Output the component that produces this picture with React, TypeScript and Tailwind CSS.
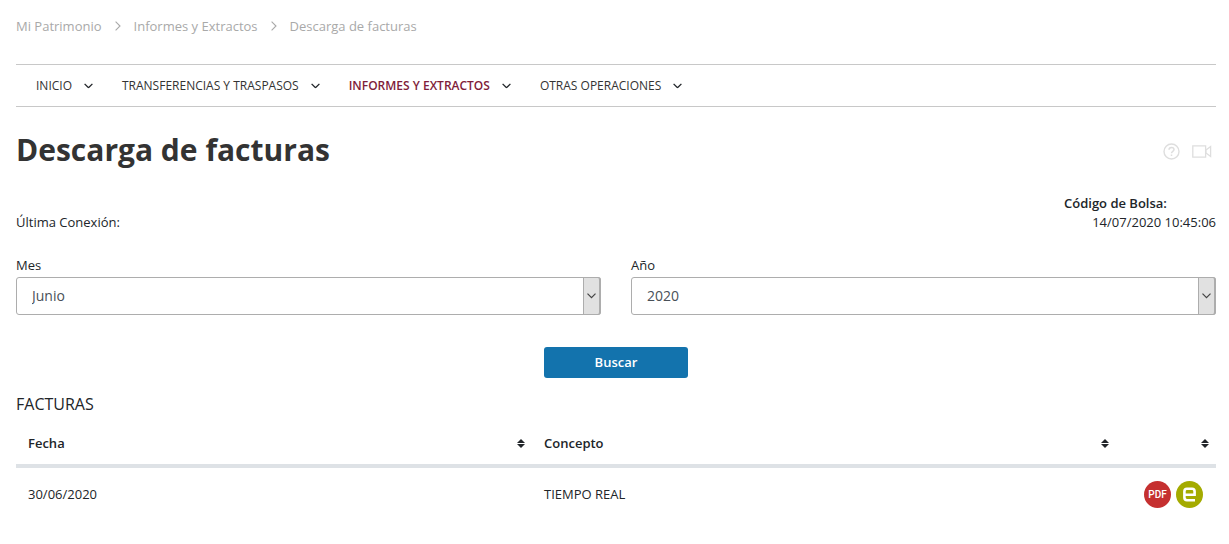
import type { ReactNode } from 'react';

const crumbs = ['Mi Patrimonio', 'Informes y Extractos', 'Descarga de facturas'];

const menu = [
  { label: 'INICIO', active: false },
  { label: 'TRANSFERENCIAS Y TRASPASOS', active: false },
  { label: 'INFORMES Y EXTRACTOS', active: true },
  { label: 'OTRAS OPERACIONES', active: false },
];

function Chevron() {
  return (
    <svg width="9" height="6" viewBox="0 0 9 6" fill="none" stroke="currentColor" strokeWidth="1.3" aria-hidden="true">
      <path d="M0.6 0.9L4 4.3Q4.5 4.7 5 4.3L8.4 0.9" />
    </svg>
  );
}

function SortButton({ label }: { label: string }) {
  return (
    <button type="button" aria-label={label} className="block text-[#212529]">
      <svg width="8" height="9" viewBox="0 0 8 9" fill="currentColor" aria-hidden="true">
        <path d="M4 0L8 4H0ZM4 9L0 5H8Z" />
      </svg>
    </button>
  );
}

function Field({ id, label, options }: { id: string; label: string; options: string[] }) {
  return (
    <div>
      <label htmlFor={id} className="block leading-5">
        {label}
      </label>
      <div className="relative mt-0.5">
        <select
          id={id}
          className="block h-[38px] w-full appearance-none rounded-[3px] border border-[#adadad] bg-white pr-8 pl-[15px] text-sm text-[#495057]"
        >
          {options.map((o) => (
            <option key={o}>{o}</option>
          ))}
        </select>
        <span className="pointer-events-none absolute inset-y-0 right-0 flex w-[18px] items-center justify-center rounded-r-[3px] border border-r-2 border-[#adadad] bg-[#e1e1e1] text-[#444]">
          <svg width="9" height="6" viewBox="0 0 9 6" fill="none" stroke="currentColor" strokeWidth="1.2" aria-hidden="true">
            <path d="M0.5 0.7L4.5 4.7L8.5 0.7" />
          </svg>
        </span>
      </div>
    </div>
  );
}

function HeadCell({ children, sort }: { children?: ReactNode; sort: string }) {
  return (
    <th className="h-12 border-b-4 border-[#dee2e6] pt-[3px] pr-[7px] pl-3 text-left font-semibold">
      <div className="flex items-center justify-between">
        <span>{children}</span>
        <SortButton label={sort} />
      </div>
    </th>
  );
}

export default function App() {
  return (
    <main className="pr-[13px] pl-4 font-['Open_Sans',sans-serif] text-[13px] text-[#212529]">
      <nav aria-label="Ruta" className="flex h-16 items-start pt-4 leading-5 text-[#a9a9a9]">
        <ol className="flex">
          {crumbs.map((c, i) => (
            <li key={c} className="flex items-center">
              {i > 0 && (
                <svg className="mx-[13px]" width="6" height="10" viewBox="0 0 6 10" fill="none" stroke="currentColor" strokeWidth="1.1" aria-hidden="true">
                  <path d="M0.6 0.6L5 5L0.6 9.4" />
                </svg>
              )}
              <a href="#">{c}</a>
            </li>
          ))}
        </ol>
      </nav>

      <nav aria-label="Principal" className="border-y border-[#c8c8c8] pl-5">
        <ul className="flex h-[41px] items-center gap-[29px] text-xs">
          {menu.map((m) => (
            <li key={m.label}>
              <a href="#" className="flex items-center gap-3">
                <span className={m.active ? 'font-semibold text-[#7f1d3a]' : 'text-[#333]'}>{m.label}</span>
                <Chevron />
              </a>
            </li>
          ))}
        </ul>
      </nav>

      <header className="flex items-center justify-between pt-5 pr-1">
        <h1 className="text-3xl leading-[46px] font-bold text-[#333]">Descarga de facturas</h1>
        <div className="flex items-center gap-3 pt-[3px] text-[#dedede]">
          <button type="button" aria-label="Ayuda">
            <svg width="17" height="17" viewBox="0 0 17 17" fill="none" stroke="currentColor" strokeWidth="1.4" aria-hidden="true">
              <circle cx="8.5" cy="8.5" r="7.5" />
              <path d="M6 6.8C6 5.3 7 4.4 8.5 4.4S11 5.3 11 6.6C11 8.3 8.5 8.4 8.5 10.3M8.5 11.6V13" strokeWidth="1.5" />
            </svg>
          </button>
          <button type="button" aria-label="Vídeo">
            <svg width="20" height="13" viewBox="0 0 20 13" fill="none" stroke="currentColor" strokeWidth="1.3" aria-hidden="true">
              <path d="M0.8 0.8H13.6V12.2H0.8ZM14 5L18.6 1.6V11.4L14 8Z" />
            </svg>
          </button>
        </div>
      </header>

      <div className="flex items-end justify-between pt-[21px] leading-[19px]">
        <p>Última Conexión:</p>
        <div className="w-[152px]">
          <p className="font-semibold">Código de Bolsa:</p>
          <p className="text-right">14/07/2020 10:45:06</p>
        </div>
      </div>

      <form onSubmit={(e) => e.preventDefault()} className="pt-[23px]">
        <div className="grid grid-cols-2 gap-[30px]">
          <Field id="mes" label="Mes" options={['Junio']} />
          <Field id="anio" label="Año" options={['2020']} />
        </div>
        <div className="flex justify-center pt-8">
          <button type="submit" className="h-[31px] w-36 rounded-[3px] bg-[#1373ad] font-semibold text-white">
            Buscar
          </button>
        </div>
      </form>

      <h2 className="pt-4 text-base leading-5 font-medium">FACTURAS</h2>

      <table className="mt-1.5 w-full table-fixed border-separate border-spacing-0">
        <colgroup>
          <col className="w-[43%]" />
          <col />
          <col className="w-[100px]" />
        </colgroup>
        <thead>
          <tr>
            <HeadCell sort="Ordenar por fecha">Fecha</HeadCell>
            <HeadCell sort="Ordenar por concepto">Concepto</HeadCell>
            <HeadCell sort="Ordenar por documento" />
          </tr>
        </thead>
        <tbody>
          <tr>
            <td className="h-[53px] pl-3">30/06/2020</td>
            <td className="pl-3">TIEMPO REAL</td>
            <td className="pr-[13px]">
              <div className="flex justify-end gap-[5px]">
                <a href="#" className="flex size-[27px] items-center justify-center rounded-full bg-[#c53030] font-['Roboto',sans-serif] text-[10px] font-medium text-white">
                  PDF
                </a>
                <a href="#" aria-label="Factura electrónica" className="flex size-[27px] items-center justify-center rounded-full bg-[#a4ab00]">
                  <svg width="27" height="27" viewBox="0 0 27 27" fill="none" stroke="#fff" strokeWidth="2.6" aria-hidden="true">
                    <path d="M19 19.2H11Q8.4 19.2 8.4 16.6V10.4Q8.4 7.8 11 7.8H16Q18.6 7.8 18.6 10.4V13.8H8.4" />
                  </svg>
                </a>
              </div>
            </td>
          </tr>
        </tbody>
      </table>
    </main>
  );
}
